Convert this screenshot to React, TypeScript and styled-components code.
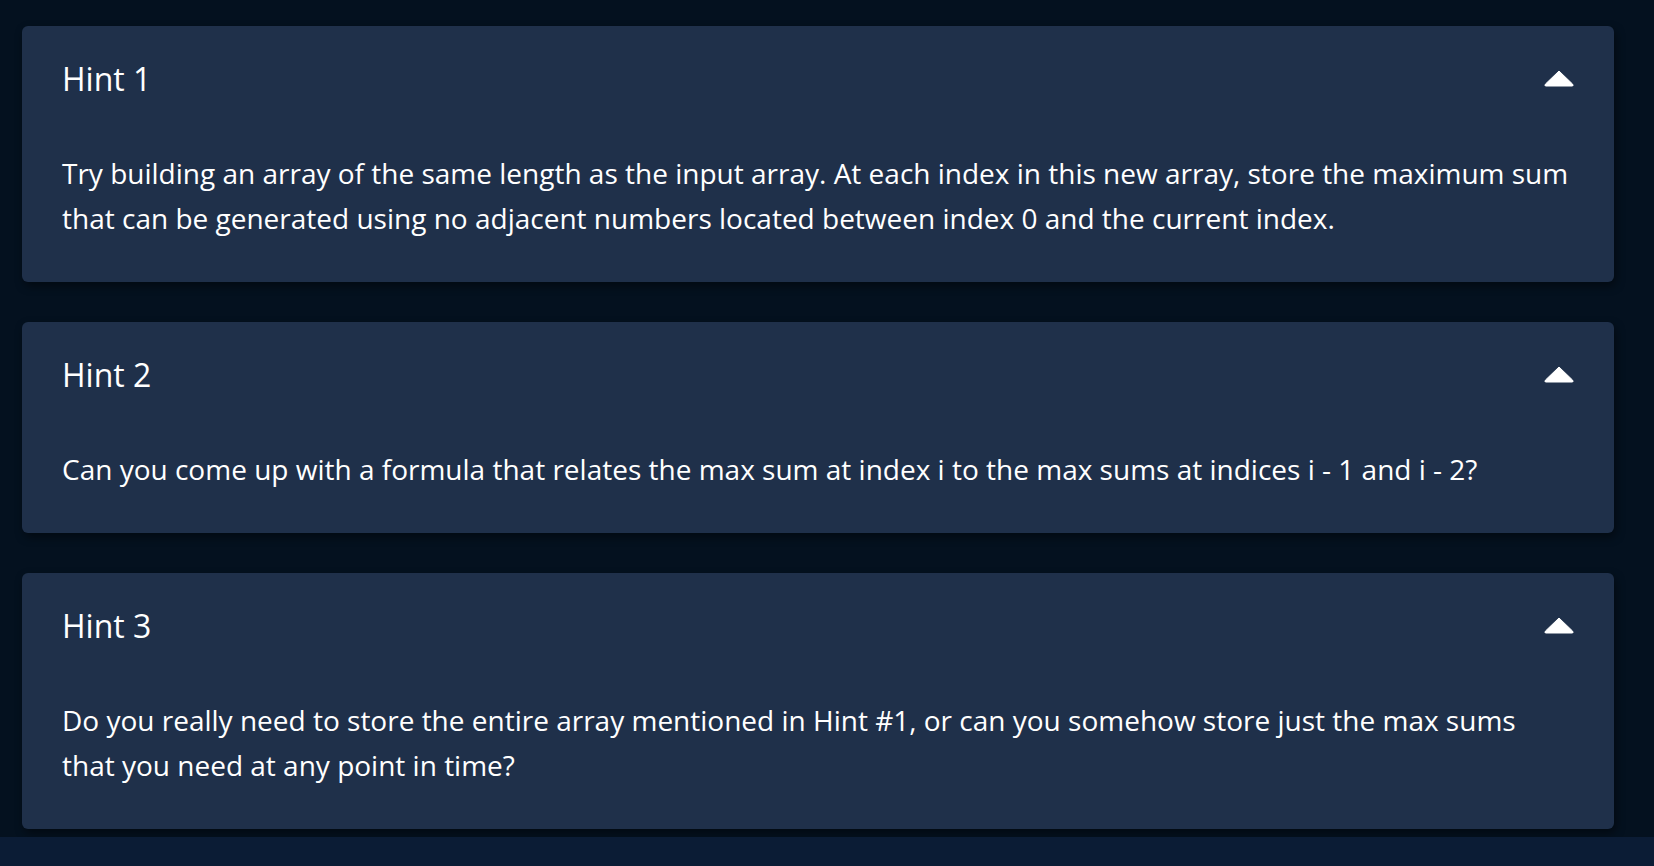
import React from 'react';
import styled, {createGlobalStyle} from 'styled-components';

const GlobalStyle = createGlobalStyle`
    html, body {
        margin: 0;
        padding: 0;
        background: #04111f;
    }
    body {
        font-family: "Open Sans", "Noto Sans", sans-serif;
        color: #ffffff;
    }
    #root {
        min-height: 100vh;
        display: flex;
        flex-direction: column;
    }
`;

const HintsSection = styled.section`
    display: flex;
    flex-direction: column;
    gap: 40px;
    padding: 26px 40px 8px 22px;
    background: #04111f;
`;

const Footer = styled.div`
    flex: 1;
    background: #0b1c35;
`;

const Card = styled.div`
    background: #1f304a;
    border-radius: 6px;
    box-shadow: 2px 4px 10px rgba(0, 0, 0, 0.45);
`;

const CardHeader = styled.div`
    display: flex;
    align-items: center;
    justify-content: space-between;
    padding: 30px 40px 0 40px;
    height: 45px;
    cursor: pointer;
`;

const Title = styled.h3`
    margin: 0;
    font-size: 32px;
    font-weight: 400;
    line-height: 45px;
`;

const Body = styled.p`
    margin: 0;
    padding: 50px 42px 41px 40px;
    font-size: 28px;
    line-height: 45px;
`;

const Caret = () => (
    <svg width="30" height="17" viewBox="0 0 30 17">
        <path
            d="M15 1 L28.5 14 Q30 16 28 16 L2 16 Q0 16 1.5 14 Z"
            fill="#ffffff"
            stroke="#ffffff"
            strokeWidth="1"
            strokeLinejoin="round"
        />
    </svg>
);

const hints = [
    {
        title: 'Hint 1',
        text: 'Try building an array of the same length as the input array. At each index in this new array, store the maximum sum that can be generated using no adjacent numbers located between index 0 and the current index.',
    },
    {
        title: 'Hint 2',
        text: 'Can you come up with a formula that relates the max sum at index i to the max sums at indices i - 1 and i - 2?',
    },
    {
        title: 'Hint 3',
        text: 'Do you really need to store the entire array mentioned in Hint #1, or can you somehow store just the max sums that you need at any point in time?',
    },
];

const App: React.FC = () => {
    return (
        <>
            <GlobalStyle />
            <HintsSection>
                {hints.map((hint) => (
                    <Card key={hint.title}>
                        <CardHeader>
                            <Title>{hint.title}</Title>
                            <Caret />
                        </CardHeader>
                        <Body>{hint.text}</Body>
                    </Card>
                ))}
            </HintsSection>
            <Footer />
        </>
    );
};

export default App;
